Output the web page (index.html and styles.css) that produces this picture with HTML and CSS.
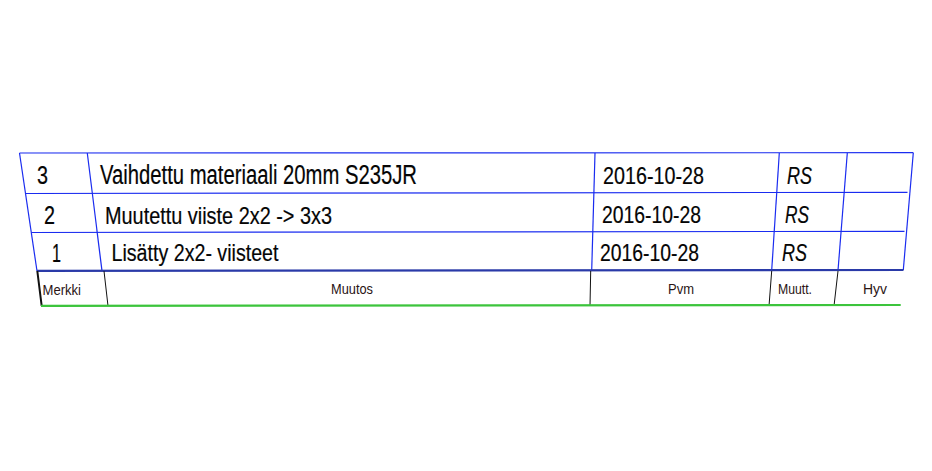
FILE: index.html
```html
<!DOCTYPE html>
<html lang="fi">
<head>
<meta charset="utf-8">
<title>Muutostaulukko</title>
<link rel="stylesheet" href="styles.css">
</head>
<body>
<div class="sheet">
<svg class="drawing" width="932" height="471" viewBox="0 0 932 471" xmlns="http://www.w3.org/2000/svg">
  <!-- blue revision grid -->
  <g class="grid-blue">
    <line x1="19.5" y1="153" x2="913.3" y2="152.7"/>
    <line x1="25.5" y1="193.5" x2="907.5" y2="192.3"/>
    <line x1="31.3" y1="232.5" x2="904.5" y2="231.3"/>
    <line x1="19.5" y1="153" x2="37" y2="271"/>
    <line x1="87.3" y1="153" x2="102" y2="271"/>
    <line x1="595" y1="153" x2="591.7" y2="270.5"/>
    <line x1="779.3" y1="153" x2="771.7" y2="270.5"/>
    <line x1="847.3" y1="153" x2="838" y2="270.5"/>
    <line x1="913.3" y1="152.7" x2="903.3" y2="270"/>
  </g>
  <line class="rule-thick" x1="37" y1="270.8" x2="903.5" y2="270"/>
  <!-- black header cells -->
  <g class="grid-black">
    <line class="heavy" x1="37.3" y1="271" x2="41.7" y2="306"/>
    <line x1="104" y1="271" x2="108" y2="306"/>
    <line x1="590.7" y1="271" x2="590" y2="306"/>
    <line x1="771.7" y1="271" x2="769" y2="306"/>
    <line x1="838" y1="271" x2="834" y2="306"/>
  </g>
  <line class="rule-green" x1="41" y1="305.8" x2="900.7" y2="305"/>

  <!-- rows -->
  <g class="cell">
    <text x="37" y="184" class="num" textLength="11" lengthAdjust="spacingAndGlyphs">3</text>
    <text x="100" y="184" class="big" textLength="317" lengthAdjust="spacingAndGlyphs">Vaihdettu materiaali 20mm S235JR</text>
    <text x="603" y="183.5" class="date" textLength="101" lengthAdjust="spacingAndGlyphs">2016-10-28</text>
    <text x="787" y="183.5" class="sign" textLength="25" lengthAdjust="spacingAndGlyphs">RS</text>

    <text x="44" y="223.5" class="num" textLength="11" lengthAdjust="spacingAndGlyphs">2</text>
    <text x="105" y="223.5" class="mid" textLength="227" lengthAdjust="spacingAndGlyphs">Muutettu viiste 2x2 -&gt; 3x3</text>
    <text x="602" y="222.5" class="date" textLength="99" lengthAdjust="spacingAndGlyphs">2016-10-28</text>
    <text x="785" y="222.5" class="sign" textLength="24" lengthAdjust="spacingAndGlyphs">RS</text>

    <text x="52" y="261.5" class="num" textLength="9" lengthAdjust="spacingAndGlyphs">1</text>
    <text x="111.5" y="261" class="mid" textLength="167" lengthAdjust="spacingAndGlyphs">Lisätty 2x2- viisteet</text>
    <text x="600" y="260.5" class="date" textLength="99" lengthAdjust="spacingAndGlyphs">2016-10-28</text>
    <text x="782" y="260.5" class="sign" textLength="25" lengthAdjust="spacingAndGlyphs">RS</text>
  </g>

  <!-- header labels -->
  <g class="label">
    <text x="42.5" y="295" textLength="38.5" lengthAdjust="spacingAndGlyphs">Merkki</text>
    <text x="331" y="294" textLength="42" lengthAdjust="spacingAndGlyphs">Muutos</text>
    <text x="668" y="293.5" textLength="26" lengthAdjust="spacingAndGlyphs">Pvm</text>
    <text x="778" y="294" textLength="34" lengthAdjust="spacingAndGlyphs">Muutt.</text>
    <text x="863" y="294" textLength="24" lengthAdjust="spacingAndGlyphs">Hyv</text>
  </g>
</svg>
</div>
</body>
</html>
```

FILE: styles.css
```css
html, body {
  margin: 0;
  padding: 0;
  background: #ffffff;
}

.sheet {
  width: 932px;
  height: 471px;
  overflow: hidden;
}

.drawing {
  display: block;
}

.grid-blue line {
  stroke: #1a2cf0;
  stroke-width: 1.2;
  fill: none;
}

.rule-thick {
  stroke: #2a3aa8;
  stroke-width: 2.2;
}

.grid-black line {
  stroke: #111111;
  stroke-width: 1;
}

.grid-black line.heavy {
  stroke-width: 2;
}

.rule-green {
  stroke: #3cc43c;
  stroke-width: 2.2;
}

.cell text {
  font-family: "Liberation Sans", Arial, sans-serif;
  fill: #050505;
  stroke: #050505;
  stroke-width: 0.2;
}

.cell .num {
  font-size: 26px;
}

.cell .big {
  font-size: 27px;
}

.cell .mid {
  font-size: 24.5px;
}

.cell .date {
  font-size: 24.5px;
}

.cell .sign {
  font-size: 24.5px;
  font-style: italic;
}

.label text {
  font-family: "Liberation Sans", Arial, sans-serif;
  font-size: 14px;
  fill: #2a1414;
}
```
